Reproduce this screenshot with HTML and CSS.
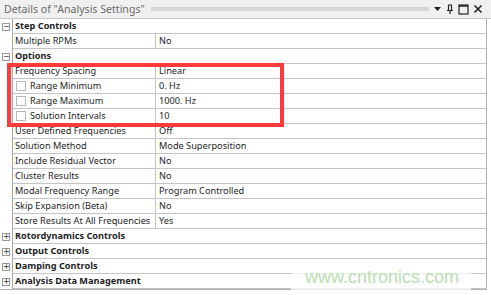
FILE: index.html
```html
<!DOCTYPE html>
<html>
<head>
<meta charset="utf-8">
<link rel="stylesheet" href="styles.css">
</head>
<body>
<div class="panel">
  <div class="titlebar">
    <span class="title">Details of "Analysis Settings"</span>
    <span class="grip"></span>
    <span class="tools">
      <svg width="9" height="6" viewBox="0 0 9 6"><path d="M1 1h7L4.5 5z" fill="#222"/></svg>
      <svg width="8" height="11" viewBox="0 0 8 11"><path d="M2 1h4M2.5 1v5M5.5 1v5M1 6.5h6M4 6.5V10" stroke="#222" fill="none" stroke-width="1.2"/></svg>
      <svg width="11" height="11" viewBox="0 0 11 11"><rect x="1" y="1" width="9" height="9" fill="none" stroke="#222" stroke-width="1.2"/><path d="M1 2h9" stroke="#222" stroke-width="1.5"/></svg>
      <svg width="10" height="10" viewBox="0 0 10 10"><path d="M1.5 1.5l7 7M8.5 1.5l-7 7" stroke="#222" stroke-width="1.6"/></svg>
    </span>
  </div>
  <div class="tree">
    <div class="gut"><span class="ex">−</span></div><div class="grp">Step Controls</div>
    <div class="gut"></div><div class="k">Multiple RPMs</div><div class="v">No</div>
    <div class="gut"><span class="ex">−</span></div><div class="grp">Options</div>
    <div class="gut"></div><div class="k">Frequency Spacing</div><div class="v">Linear</div>
    <div class="gut"></div><div class="k"><span class="cb"></span>Range Minimum</div><div class="v">0. Hz</div>
    <div class="gut"></div><div class="k"><span class="cb"></span>Range Maximum</div><div class="v">1000. Hz</div>
    <div class="gut"></div><div class="k"><span class="cb"></span>Solution Intervals</div><div class="v">10</div>
    <div class="gut"></div><div class="k">User Defined Frequencies</div><div class="v">Off</div>
    <div class="gut"></div><div class="k">Solution Method</div><div class="v">Mode Superposition</div>
    <div class="gut"></div><div class="k">Include Residual Vector</div><div class="v">No</div>
    <div class="gut"></div><div class="k">Cluster Results</div><div class="v">No</div>
    <div class="gut"></div><div class="k">Modal Frequency Range</div><div class="v">Program Controlled</div>
    <div class="gut"></div><div class="k">Skip Expansion (Beta)</div><div class="v">No</div>
    <div class="gut"></div><div class="k">Store Results At All Frequencies</div><div class="v">Yes</div>
    <div class="gut"><span class="ex">+</span></div><div class="grp">Rotordynamics Controls</div>
    <div class="gut"><span class="ex">+</span></div><div class="grp">Output Controls</div>
    <div class="gut"><span class="ex">+</span></div><div class="grp">Damping Controls</div>
    <div class="gut"><span class="ex">+</span></div><div class="grp">Analysis Data Management</div>
  </div>
  <div class="redbox"></div>
  <div class="watermark">www.cntronics.com</div>
</div>
</body>
</html>
```
FILE: styles.css
```css
html, body { margin: 0; padding: 0; }
body {
  width: 491px; height: 295px; overflow: hidden;
  background: #fff;
  font-family: "Noto Sans", "Open Sans", sans-serif;
  color: #1e1e1e;
}
.panel { position: relative; width: 491px; height: 295px; background: #fff; }
.titlebar {
  height: 18px;
  display: flex; align-items: center;
  background: #f0f0f0;
  border-bottom: 1px solid #c8c8c8;
  padding-left: 4px; padding-right: 8px;
}
.title { font-size: 10.6px; color: #6a6a6a; white-space: nowrap; }
.grip {
  flex: 1; height: 4px; margin: 0 4px 0 6px;
  background-image: radial-gradient(circle, #b4b4b4 0.6px, transparent 0.8px);
  background-size: 2px 2px;
}
.tools { display: flex; align-items: center; gap: 4px; }
.tools svg { display: block; }
.tree {
  display: grid;
  grid-template-columns: 13px 143px 1fr;
  grid-auto-rows: 15px;
  margin-right: 4px;
  border-right: 1px solid #b0b0b0;
  border-bottom: 1px solid #b0b0b0;
  font-size: 9.2px;
}
.gut { border-right: 1px solid #a8a8a8; position: relative; background: #fff; }
.ex {
  position: absolute; left: 2px; top: 4px;
  width: 6px; height: 6px; border: 1px solid #9a9a9a;
  font-size: 8px; line-height: 6px; text-align: center; color: #333;
  font-family: "DejaVu Sans", sans-serif; background: #fff;
}
.grp {
  grid-column: span 2;
  border-bottom: 1px solid #c4c4c4;
  font-weight: bold; line-height: 14px; padding-left: 2px;
  white-space: nowrap;
}
.k, .v {
  border-bottom: 1px solid #c4c4c4;
  line-height: 14px; padding-left: 2px; white-space: nowrap; overflow: hidden;
  display: flex; align-items: center;
}
.k { border-right: 1px solid #c4c4c4; }
.v { padding-left: 3px; }
.cb {
  display: inline-block; width: 8px; height: 8px;
  border: 1px solid #b8b8b8; margin: 0 4px 0 1px; background: #fff;
}
.redbox {
  position: absolute; left: 7px; top: 63px; width: 269px; height: 56px;
  border: 4px solid #ff3a3a;
}
.watermark {
  position: absolute; left: 291px; top: 264px; width: 180px; height: 26px;
  background: rgba(255,255,255,0.75);
  font-family: "Liberation Sans", Arial, sans-serif; font-size: 18px;
  color: #b8e0b2; line-height: 26px; padding-left: 14px; box-sizing: border-box;
}
```
